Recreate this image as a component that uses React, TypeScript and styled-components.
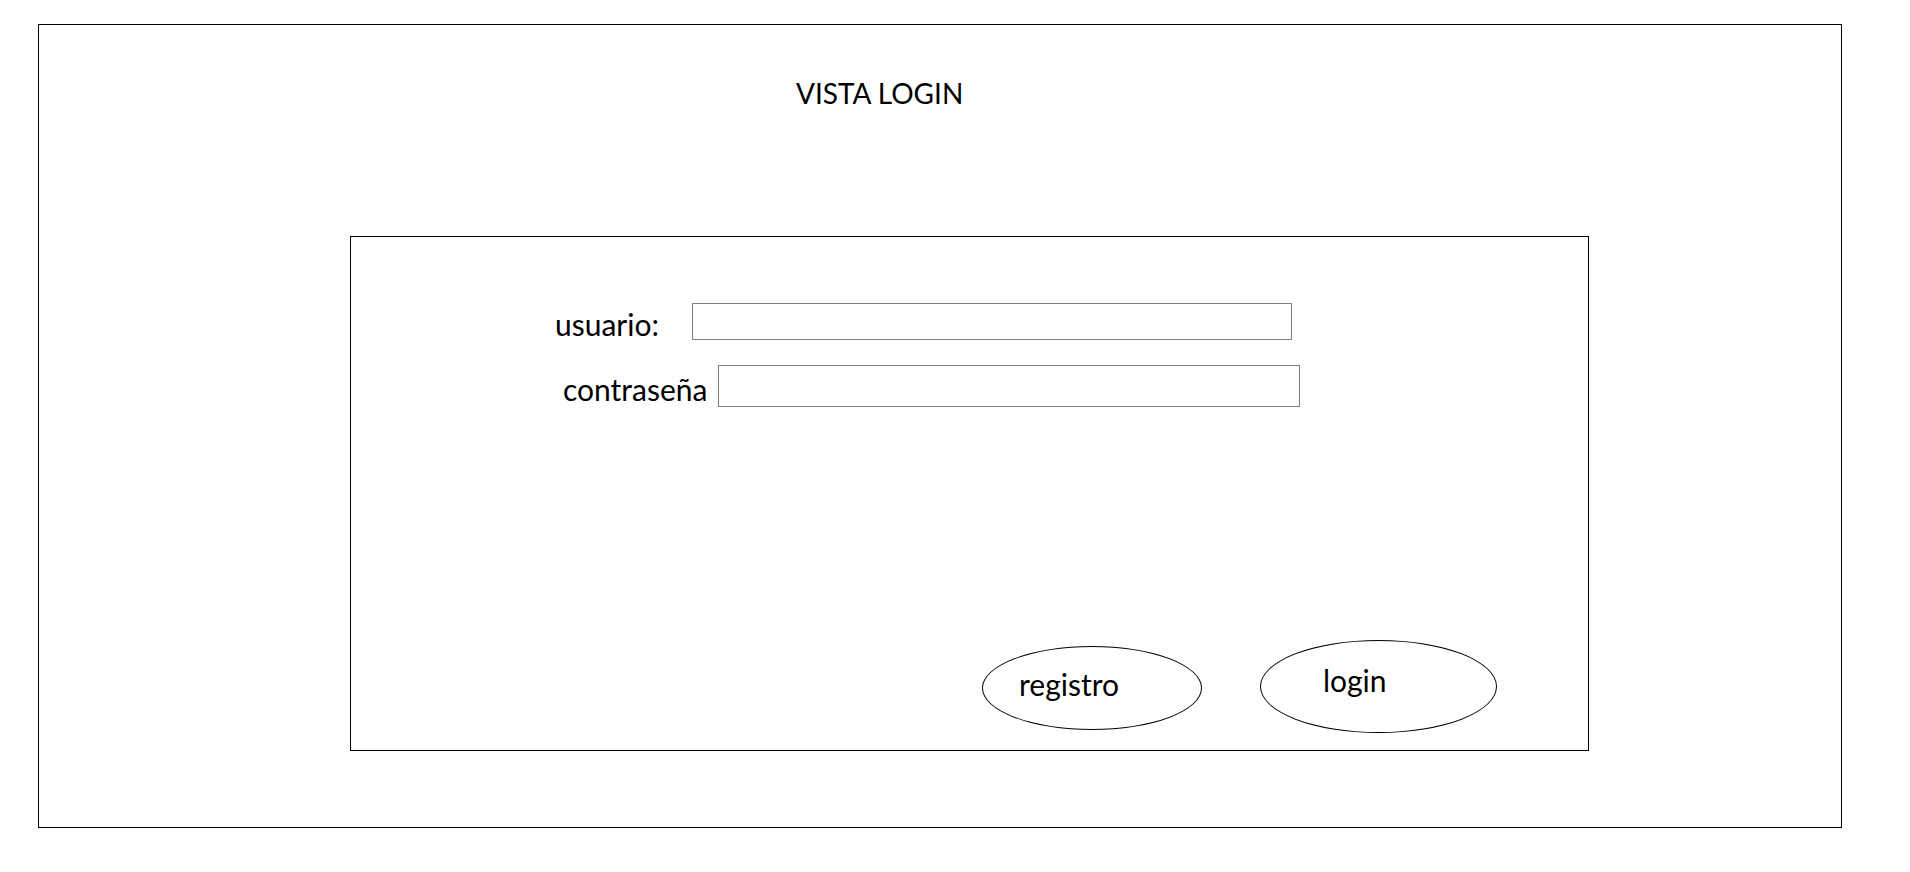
import React from "react";
import styled, { createGlobalStyle } from "styled-components";

const Global = createGlobalStyle`
  html, body { margin: 0; padding: 0; background: #fff; }
  body { font-family: Lato, "Open Sans", sans-serif; color: #000; }
  *, *::before, *::after { box-sizing: border-box; }
`;

const Frame = styled.main`
  margin: 24px 0 0 38px;
  width: 1804px;
  height: 804px;
  border: 1px solid #000;
  display: flex;
  flex-direction: column;
`;

const Title = styled.h1`
  margin: 50px 0 0 757px;
  font-size: 28px;
  font-weight: 400;
  line-height: 36px;
  white-space: nowrap;
`;

const Panel = styled.section`
  margin: 125px 0 0 311px;
  width: 1239px;
  height: 515px;
  border: 1px solid #000;
  display: flex;
  flex-direction: column;
`;

const Field = styled.div<{ $top: number; $inputLeft: number; $inputWidth: number }>`
  margin-top: ${(p) => p.$top}px;
  display: grid;
  grid-template-columns: ${(p) => p.$inputLeft}px ${(p) => p.$inputWidth}px;
  align-items: start;
`;

const Label = styled.label<{ $left: number; $offset: number }>`
  padding-left: ${(p) => p.$left}px;
  margin-top: ${(p) => p.$offset}px;
  font-size: 30px;
  line-height: 36px;
  white-space: nowrap;
`;

const Input = styled.input<{ $height: number }>`
  width: 100%;
  height: ${(p) => p.$height}px;
  border: 1px solid #808080;
  border-radius: 0;
  padding: 0 6px;
  font: inherit;
  font-size: 20px;
  background: #fff;
  outline: none;
`;

const Actions = styled.div`
  margin: 233px 0 0 631px;
  display: flex;
  align-items: flex-start;
  gap: 58px;
`;

const Oval = styled.button<{
  $w: number;
  $h: number;
  $top: number;
  $padLeft: number;
  $padTop: number;
}>`
  margin-top: ${(p) => p.$top}px;
  width: ${(p) => p.$w}px;
  height: ${(p) => p.$h}px;
  border: 1px solid #000;
  border-radius: 50%;
  background: #fff;
  padding: ${(p) => p.$padTop}px 0 0 ${(p) => p.$padLeft}px;
  display: flex;
  align-items: flex-start;
  justify-content: flex-start;
  font-family: inherit;
  font-size: 30px;
  line-height: 36px;
  color: #000;
  cursor: pointer;
`;

export default function App() {
  return (
    <>
      <Global />
      <Frame>
        <Title>VISTA LOGIN</Title>
        <Panel>
          <Field $top={66} $inputLeft={341} $inputWidth={600}>
            <Label $left={204} $offset={3} htmlFor="usuario">usuario:</Label>
            <Input id="usuario" $height={37} />
          </Field>
          <Field $top={23} $inputLeft={367} $inputWidth={582}>
            <Label $left={212} $offset={6} htmlFor="pass">contraseña</Label>
            <Input id="pass" type="password" $height={42} />
          </Field>
          <Actions>
            <Oval $w={220} $h={84} $top={6} $padLeft={36} $padTop={19}>registro</Oval>
            <Oval $w={237} $h={93} $top={0} $padLeft={62} $padTop={21}>login</Oval>
          </Actions>
        </Panel>
      </Frame>
    </>
  );
}
